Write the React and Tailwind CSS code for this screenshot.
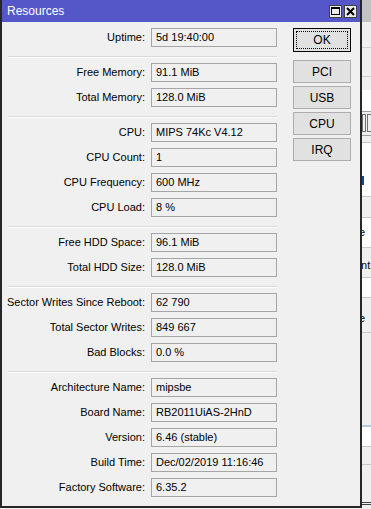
import React from "react";

const sections = [
  [["Uptime", "5d 19:40:00"]],
  [
    ["Free Memory", "91.1 MiB"],
    ["Total Memory", "128.0 MiB"],
  ],
  [
    ["CPU", "MIPS 74Kc V4.12"],
    ["CPU Count", "1"],
    ["CPU Frequency", "600 MHz"],
    ["CPU Load", "8 %"],
  ],
  [
    ["Free HDD Space", "96.1 MiB"],
    ["Total HDD Size", "128.0 MiB"],
  ],
  [
    ["Sector Writes Since Reboot", "62 790"],
    ["Total Sector Writes", "849 667"],
    ["Bad Blocks", "0.0 %"],
  ],
  [
    ["Architecture Name", "mipsbe"],
    ["Board Name", "RB2011UiAS-2HnD"],
    ["Version", "6.46 (stable)"],
    ["Build Time", "Dec/02/2019 11:16:46"],
    ["Factory Software", "6.35.2"],
  ],
];

function Row({ label, value }) {
  return (
    <div className="flex items-center h-[19px]">
      <div className="w-[146px] pr-[3px] text-right whitespace-nowrap">{label}:</div>
      <div className="ml-[3px] w-[126px] h-[19px] border border-[#a5a5a5] bg-[#f0f0f0] pl-[4px] flex items-center whitespace-nowrap">
        {value}
      </div>
    </div>
  );
}

function Btn({ children, focus }) {
  return (
    <div
      className={`w-[58px] border flex items-center justify-center bg-[#e1e1e1] ${
        focus ? "border-black h-[24px] p-[2px]" : "border-[#adadad] h-[23px]"
      }`}
    >
      {focus ? (
        <div className="w-full h-full border border-dotted border-black flex items-center justify-center">
          {children}
        </div>
      ) : (
        children
      )}
    </div>
  );
}

// the window sitting behind, only a sliver shows at the right edge
function BackWindow() {
  return (
    <div className="absolute left-[360px] top-0 w-[20px] h-[509px] bg-[#f0f0f0] text-[11px] text-black overflow-hidden">
      <div className="h-[22px] bg-[#c3c3c3]" />
      <div className="h-[26px] border-b border-[#d0d0d0]" />
      <div className="h-[29px] border-b border-[#d0d0d0]" />
      <div className="h-[13px]" />
      <div className="h-[22px] bg-white border-b border-[#a0a0a0]" />
      <div className="h-[24px] flex gap-[1px] pl-[2px] pt-[2px] border-b border-[#a0a0a0]">
        <div className="w-[4px] h-[18px] border border-[#707070]" />
        <div className="w-[6px] h-[18px] border border-[#707070]" />
      </div>
      <div className="h-[7px] border-b border-[#c8c8c8]" />
      <div className="h-[54px] bg-white border-b border-[#c8c8c8] pl-[2px] pt-[33px]">
        <div className="w-[2px] h-[9px] bg-[#1f3f9f]" />
      </div>
      <div className="h-[21px] border-b border-[#c8c8c8]" />
      <div className="h-[30px] bg-white border-b border-[#c8c8c8] -ml-[1px] pt-[6px]">e</div>
      <div className="h-[30px] border-b border-[#c8c8c8] -ml-[5px] pt-[9px]">ent</div>
      <div className="h-[20px] bg-white border-b border-[#c8c8c8]" />
      <div className="h-[35px] border-b border-[#c8c8c8] -ml-[1px] pt-[12px]">e</div>
      <div className="h-[92px]" />
      <div className="h-[2px] bg-[#b8c8e0]" />
      <div className="h-[20px] border-b border-[#c8c8c8] bg-white" />
      <div className="h-[18px] border-b border-[#c8c8c8]" />
      <div className="h-[37px]" />
      <div className="h-[2px] border-t border-[#404040]" />
      <div className="h-[2px] border-t border-[#404040]" />
    </div>
  );
}

export default function App() {
  return (
    <div className="relative w-[371px] h-[509px] overflow-hidden bg-[#f0f0f0] text-[11px] text-black font-['Liberation_Sans',Arial,sans-serif]">
      <BackWindow />
      <div className="relative w-[362px] h-[508px] bg-[#f0f0f0] border-x-2 border-b-2 border-[#262626]">
        <div className="h-[22px] bg-[#5557c9] flex items-center pl-[5px] pr-[3px]">
          <span className="text-white text-[12px]">Resources</span>
          <div className="ml-auto flex gap-[2px] items-center">
            <div className="w-[13px] h-[13px] bg-[#ececec] border border-[#404040] flex items-center justify-center">
              <div className="w-[9px] h-[8px] border border-black border-t-2" />
            </div>
            <div className="w-[13px] h-[13px] bg-[#ececec] border border-[#404040] flex items-center justify-center">
              <svg width="9" height="9" viewBox="0 0 9 9">
                <path d="M1 1 L8 8 M8 1 L1 8" stroke="#000" strokeWidth="2" />
              </svg>
            </div>
          </div>
        </div>
        <div className="flex pt-[6px]">
          <div className="w-[283px] flex flex-col">
            {sections.map((rows, si) => (
              <div key={si} className="flex flex-col">
                {si > 0 && (
                  <div className="ml-[6px] w-[269px] h-[2px] mt-[9px] mb-[5px] border-t border-[#d9d9d9] border-b border-b-white" />
                )}
                <div className="flex flex-col gap-[6px]">
                  {rows.map(([l, v]) => (
                    <Row key={l} label={l} value={v} />
                  ))}
                </div>
              </div>
            ))}
          </div>
          <div className="ml-[8px] flex flex-col text-[12px]">
            <Btn focus>OK</Btn>
            <div className="mt-[8px] flex flex-col gap-[3px]">
              <Btn>PCI</Btn>
              <Btn>USB</Btn>
              <Btn>CPU</Btn>
              <Btn>IRQ</Btn>
            </div>
          </div>
        </div>
      </div>
    </div>
  );
}
